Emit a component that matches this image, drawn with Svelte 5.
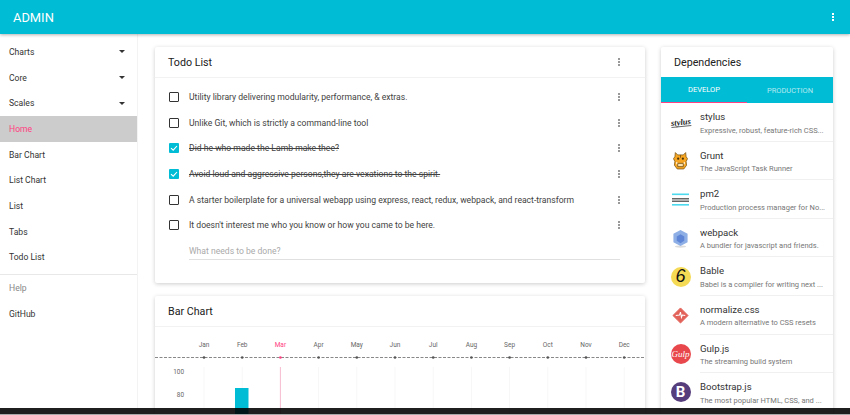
<script>
  const nav = [
    { label: 'Charts', arrow: true },
    { label: 'Core', arrow: true },
    { label: 'Scales', arrow: true },
    { label: 'Home', active: true },
    { label: 'Bar Chart' },
    { label: 'List Chart' },
    { label: 'List' },
    { label: 'Tabs' },
    { label: 'Todo List' }
  ];

  const todos = [
    { text: 'Utility library delivering modularity, performance, & extras.', done: false },
    { text: 'Unlike Git, which is strictly a command-line tool', done: false },
    { text: 'Did he who made the Lamb make thee?', done: true },
    { text: 'Avoid loud and aggressive persons,they are vexations to the spirit.', done: true },
    { text: 'A starter boilerplate for a universal webapp using express, react, redux, webpack, and react-transform', done: false },
    { text: "It doesn't interest me who you know or how you came to be here.", done: false }
  ];

  const deps = [
    { id: 'stylus', name: 'stylus', desc: 'Expressive, robust, feature-rich CSS...' },
    { id: 'grunt', name: 'Grunt', desc: 'The JavaScript Task Runner' },
    { id: 'pm2', name: 'pm2', desc: 'Production process manager for No...' },
    { id: 'webpack', name: 'webpack', desc: 'A bundler for javascript and friends.' },
    { id: 'babel', name: 'Bable', desc: 'Babel is a compiler for writing next ...' },
    { id: 'normalize', name: 'normalize.css', desc: 'A modern alternative to CSS resets' },
    { id: 'gulp', name: 'Gulp.js', desc: 'The streaming build system' },
    { id: 'bootstrap', name: 'Bootstrap.js', desc: 'The most popular HTML, CSS, and ...' }
  ];

  const months = ['Jan', 'Feb', 'Mar', 'Apr', 'May', 'Jun', 'Jul', 'Aug', 'Sep', 'Oct', 'Nov', 'Dec'];
  const monthX = (i) => 49 + i * 38.2;
</script>

{#snippet kebab()}
  <span class="kebab"><i></i><i></i><i></i></span>
{/snippet}

<div class="page">
  <header class="topbar">
    <span class="brand">ADMIN</span>
    <span class="top-more"><i></i><i></i><i></i></span>
  </header>

  <div class="body">
    <nav class="sidebar">
      {#each nav as item}
        <div class="nav-item" class:active={item.active}>
          {item.label}
          {#if item.arrow}<span class="caret"></span>{/if}
        </div>
      {/each}
      <div class="divider"></div>
      <div class="nav-item help">Help</div>
      <div class="nav-item">GitHub</div>
    </nav>

    <main class="content">
      <div class="col-main">
        <section class="card">
          <div class="card-head">
            <span>Todo List</span>
            {@render kebab()}
          </div>
          <div class="todo-list">
            {#each todos as todo}
              <div class="todo">
                <span class="check" class:on={todo.done}>
                  {#if todo.done}
                    <svg viewBox="0 0 10 10" width="10" height="10"><path d="M2 5.2 L4.2 7.2 L8 3" fill="none" stroke="#fff" stroke-width="1.1" /></svg>
                  {/if}
                </span>
                <span class="todo-text" class:done={todo.done}>{todo.text}</span>
                {@render kebab()}
              </div>
            {/each}
            <div class="todo-input">What needs to be done?</div>
          </div>
        </section>

        <section class="card chart-card">
          <div class="card-head">
            <span>Bar Chart</span>
          </div>
          <svg class="chart" viewBox="0 0 490 90" width="490" height="90">
            {#each months as m, i}
              <text class="month" class:hot={i === 2} x={monthX(i)} y="19.5" text-anchor="middle">{m}</text>
              <line x1={monthX(i)} x2={monthX(i)} y1="40" y2="90" stroke={i === 2 ? '#f8bbd0' : '#f7f7f7'} />
            {/each}
            <line x1="0" x2="490" y1="30.5" y2="30.5" stroke="#888" stroke-dasharray="3 1.5" />
            {#each months as m, i}
              <circle cx={monthX(i)} cy="30.5" r="1.3" fill={i === 2 ? '#ff4081' : '#555'} />
            {/each}
            <text class="axis" x="29" y="47" text-anchor="end">100</text>
            <text class="axis" x="29" y="69.5" text-anchor="end">80</text>
            <rect x="80" y="61" width="13" height="29" fill="#00bcd4" />
            <rect x="93" y="61" width="1" height="29" fill="#80deea" />
          </svg>
        </section>
      </div>

      <section class="card deps">
        <div class="deps-head">Dependencies</div>
        <div class="tabs">
          <div class="tab current">DEVELOP</div>
          <div class="tab">PRODUCTION</div>
        </div>
        {#each deps as dep}
          <div class="dep">
            <div class="dep-icon">
              {#if dep.id === 'stylus'}
                <span class="stylus-logo">stylus</span>
              {:else if dep.id === 'grunt'}
                <svg viewBox="0 0 16 19" width="15" height="18">
                  <path d="M2.5 0.5 L5 3 H11 L13.5 0.5 L14 5 L15.5 7 L14 10 L14.5 14 L11.5 18 H4.5 L1.5 14 L2 10 L0.5 7 L2 5 Z" fill="#f6a623" stroke="#7a5312" stroke-width="0.8" />
                  <circle cx="5.5" cy="7" r="1.2" fill="#4a3208" />
                  <circle cx="10.5" cy="7" r="1.2" fill="#4a3208" />
                  <path d="M8 3 V6 M5 12 H11 V15.5 H5 Z" stroke="#7a5312" stroke-width="0.9" fill="#fbe2b0" />
                  <path d="M4 10.5 V13 M12 10.5 V13" stroke="#fff" stroke-width="1" />
                </svg>
              {:else if dep.id === 'pm2'}
                <svg viewBox="0 0 17 13" width="17" height="13">
                  <rect y="0.5" width="17" height="1.6" fill="#4dd9ee" />
                  <rect y="5" width="17" height="1.5" fill="#666" />
                  <rect y="7.5" width="17" height="1.5" fill="#666" />
                  <rect y="11" width="17" height="1.6" fill="#4dd9ee" />
                </svg>
              {:else if dep.id === 'webpack'}
                <svg viewBox="0 0 18 20" width="17" height="19">
                  <ellipse cx="9" cy="18.5" rx="6" ry="1.2" fill="#ddd" />
                  <path d="M9 1 L16.5 5 V14 L9 18 L1.5 14 V5 Z" fill="#8eaee6" />
                  <path d="M9 5.5 L13 8 V12.5 L9 15 L5 12.5 V8 Z" fill="#5f86d6" />
                </svg>
              {:else if dep.id === 'babel'}
                <span class="babel-logo">6</span>
              {:else if dep.id === 'normalize'}
                <svg viewBox="0 0 18 18" width="17" height="17">
                  <path d="M9 1 L17 9 L9 17 L1 9 Z" fill="#e2625a" stroke="#e2625a" stroke-linejoin="round" />
                  <path d="M4 9 L8 8.5 L9 5.5 L10 11 L11 8.5 L14 9" fill="none" stroke="#fff" stroke-width="1.1" />
                </svg>
              {:else if dep.id === 'gulp'}
                <span class="gulp-logo">Gulp</span>
              {:else}
                <span class="bootstrap-logo">B</span>
              {/if}
            </div>
            <div class="dep-body">
              <div class="dep-name">{dep.name}</div>
              <div class="dep-desc">{dep.desc}</div>
            </div>
          </div>
        {/each}
      </section>
    </main>
  </div>

  <div class="bottom-bar"></div>
</div>

<style>
  :global(body) {
    margin: 0;
    background: #fff;
    font-family: Roboto, "Liberation Sans", sans-serif;
    color: #333;
    overflow: hidden;
  }

  .page {
    position: relative;
    height: 415px;
    overflow: hidden;
  }

  .topbar {
    position: relative;
    z-index: 2;
    height: 34px;
    padding: 0 16px 0 13px;
    background: #00bcd4;
    color: #fff;
    display: flex;
    align-items: center;
    justify-content: space-between;
    box-shadow: 0 1px 3px rgba(0, 0, 0, 0.3);
  }

  .brand {
    font-size: 12.9px;
  }

  .top-more {
    display: flex;
    flex-direction: column;
    gap: 1px;
  }

  .top-more i {
    width: 2px;
    height: 2px;
    background: #fff;
  }

  .body {
    display: flex;
  }

  .sidebar {
    width: 137px;
    flex-shrink: 0;
    padding-top: 5px;
    border-right: 1px solid #f3f3f3;
    font-size: 8.6px;
  }

  .nav-item {
    height: 25.7px;
    padding: 0 12px 0 9px;
    display: flex;
    align-items: center;
    justify-content: space-between;
  }

  .nav-item.active {
    background: #ccc;
    color: #ff4081;
  }

  .nav-item.help {
    color: #888;
  }

  .caret {
    width: 0;
    height: 0;
    border-left: 3px solid transparent;
    border-right: 3px solid transparent;
    border-top: 3px solid #333;
  }

  .divider {
    height: 1px;
    margin: 4px 0 0;
    background: #e8e8e8;
  }

  .content {
    flex: 1;
    display: flex;
    align-items: flex-start;
    gap: 16px;
    padding: 13px 17px 0 17px;
  }

  .col-main {
    width: 490px;
    flex-shrink: 0;
    display: flex;
    flex-direction: column;
    gap: 13px;
  }

  .card {
    background: #fff;
    border-radius: 2px;
    box-shadow: 0 1px 4px rgba(0, 0, 0, 0.2);
  }

  .card-head {
    height: 30px;
    padding: 0 25px 0 13px;
    display: flex;
    align-items: center;
    justify-content: space-between;
    font-size: 10.7px;
    color: #212121;
    border-bottom: 1px solid #f2f2f2;
  }

  .kebab {
    display: flex;
    flex-direction: column;
    gap: 1px;
    flex-shrink: 0;
  }

  .kebab i {
    width: 2px;
    height: 2px;
    background: #999;
  }

  .todo-list {
    padding: 6px 25px 23px 14px;
  }

  .todo {
    height: 25.7px;
    display: flex;
    align-items: center;
    font-size: 8.6px;
    color: #424242;
  }

  .check {
    width: 10px;
    height: 10px;
    box-sizing: border-box;
    border: 1.2px solid #333;
    border-radius: 1px;
    margin-right: 10px;
    flex-shrink: 0;
    position: relative;
  }

  .check.on {
    background: #00bcd4;
    border: none;
  }

  .check svg {
    display: block;
  }

  .todo-text {
    flex: 1;
  }

  .todo-text.done {
    text-decoration: line-through;
  }

  .todo-input {
    margin-left: 20px;
    height: 22px;
    padding-top: 5px;
    box-sizing: border-box;
    display: flex;
    align-items: center;
    font-size: 8.6px;
    color: #aaa;
    border-bottom: 1px solid #e0e0e0;
  }

  .chart-card {
    height: 200px;
  }

  .chart {
    display: block;
  }

  .month {
    font-size: 6.5px;
    fill: #666;
  }

  .month.hot {
    fill: #ff4081;
  }

  .axis {
    font-size: 6.4px;
    fill: #666;
  }

  .deps {
    width: 172px;
    flex-shrink: 0;
    height: 400px;
  }

  .deps-head {
    height: 30px;
    padding: 0 13px;
    display: flex;
    align-items: center;
    font-size: 10.7px;
    color: #212121;
  }

  .tabs {
    display: flex;
    background: #00bcd4;
    height: 26px;
  }

  .tab {
    flex: 1;
    box-sizing: border-box;
    display: flex;
    align-items: center;
    justify-content: center;
    font-size: 7.5px;
    color: rgba(255, 255, 255, 0.7);
  }

  .tab.current {
    color: #fff;
    border-bottom: 1.5px solid #ff4081;
  }

  .dep {
    height: 38.6px;
    display: flex;
    align-items: stretch;
  }

  .dep-icon {
    width: 39px;
    flex-shrink: 0;
    display: flex;
    align-items: center;
    justify-content: center;
  }

  .dep-body {
    flex: 1;
    min-width: 0;
    box-sizing: border-box;
    padding: 8px 0 0 0;
    border-bottom: 1px solid #f0f0f0;
  }

  .dep-name {
    font-size: 9.6px;
    color: #333;
    line-height: 12px;
    margin-bottom: 1.5px;
  }

  .dep-desc {
    font-size: 7.5px;
    color: #777;
    line-height: 11px;
    white-space: nowrap;
  }

  .stylus-logo {
    font-family: "Liberation Serif", serif;
    font-style: italic;
    font-weight: 700;
    font-size: 8.5px;
    color: #222;
    border-bottom: 1px solid #666;
    line-height: 8px;
    transform: rotate(-6deg);
  }

  .babel-logo {
    width: 20px;
    height: 20px;
    border-radius: 50%;
    background: #f5da55;
    color: #111;
    display: flex;
    align-items: center;
    justify-content: center;
    font-family: "Liberation Sans", sans-serif;
    font-style: italic;
    font-size: 18px;
  }

  .gulp-logo {
    width: 20px;
    height: 20px;
    border-radius: 50%;
    background: #e8474c;
    color: #fff;
    display: flex;
    align-items: center;
    justify-content: center;
    font-family: "Liberation Serif", serif;
    font-style: italic;
    font-size: 9px;
  }

  .bootstrap-logo {
    width: 20px;
    height: 20px;
    border-radius: 50%;
    background: #563d7c;
    color: #fff;
    display: flex;
    align-items: center;
    justify-content: center;
    font-weight: 700;
    font-size: 15px;
  }

  .bottom-bar {
    position: absolute;
    left: 0;
    right: 0;
    bottom: 0;
    height: 7px;
    box-sizing: border-box;
    z-index: 3;
    background: rgba(0, 0, 0, 0.88);
    border-bottom: 1px solid #aaa;
    background-clip: padding-box;
  }
</style>
